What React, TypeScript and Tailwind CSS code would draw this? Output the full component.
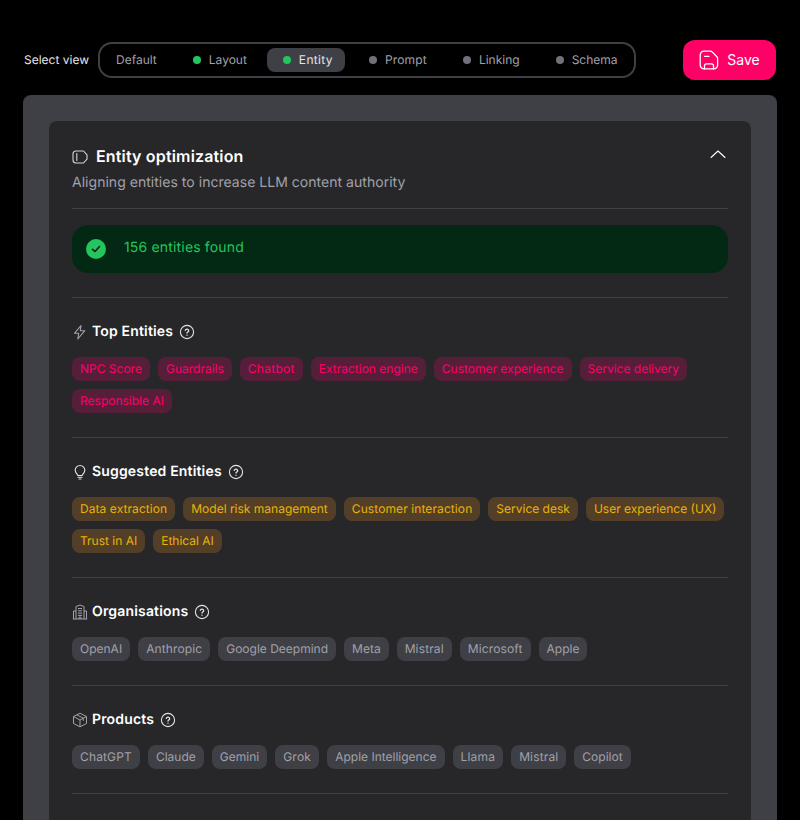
const font = { fontFamily: 'Inter, sans-serif' };

const tabs = [
  { label: 'Default', dot: '', track: '' },
  { label: 'Layout', dot: 'bg-[#22c55e]', track: '' },
  { label: 'Entity', dot: 'bg-[#22c55e]', track: 'tracking-[0.028em]', active: true },
  { label: 'Prompt', dot: 'bg-[#71717a]', track: 'tracking-[0.014em]' },
  { label: 'Linking', dot: 'bg-[#71717a]', track: '' },
  { label: 'Schema', dot: 'bg-[#71717a]', track: '' },
];

// chips whose labels run a little wider with the installed Inter
const chipTracking: Record<string, string> = {
  Chatbot: 'tracking-[0.024em]',
  'Customer interaction': 'tracking-[0.008em]',
  'Data extraction': 'tracking-[0.006em]',
  Anthropic: 'tracking-[0.01em]',
  Mistral: 'tracking-[0.012em]',
  Microsoft: 'tracking-[0.01em]',
  ChatGPT: 'tracking-[0.012em]',
  Grok: 'tracking-[0.02em]',
  Llama: 'tracking-[0.015em]',
};

function HelpIcon() {
  return (
    <svg width="16" height="16" viewBox="0 0 16 16" fill="none" stroke="#e4e4e7" strokeWidth="1.1" strokeLinecap="round" strokeLinejoin="round">
      <circle cx="8" cy="8" r="6.6" />
      <path strokeWidth="1.3" d="M6.3 6.300a1.750 1.750 0 0 1 3.400.500c0 1.100-1.700 1.400-1.700 2.300" />
      <path strokeWidth="1.3" d="M8 11.200v.1" />
    </svg>
  );
}

function BoltIcon() {
  return (
    <svg width="16" height="16" viewBox="0 0 16 16" fill="none" stroke="#a1a1aa" strokeWidth="1.1" strokeLinejoin="round">
      <path d="M9 1.500 2.500 9.300h4.200L5.800 15l7-8.300H8.300L9 1.500Z" />
    </svg>
  );
}

function BulbIcon() {
  return (
    <svg width="16" height="16" viewBox="0 0 16 16" fill="none" stroke="#e4e4e7" strokeWidth="1.1" strokeLinecap="round" strokeLinejoin="round">
      <path d="M5.800 11.500c0-1.300-2.600-2.400-2.600-5.200a4.800 4.800 0 0 1 9.600 0c0 2.800-2.600 3.900-2.600 5.200Z" />
      <path d="M6 13.300h4M7 15h2" />
    </svg>
  );
}

function BuildingIcon() {
  return (
    <svg width="16" height="16" viewBox="0 0 16 16" fill="none" stroke="#a1a1aa" strokeWidth="1" strokeLinejoin="round">
      <path d="M4 15V2.500L8 1l4 1.500V15M4 7H1.500v8M12 7h2.500v8M.8 15h14.400" />
      <path d="M6 4.500h4M6 6.800h4M6 9.100h4M6 11.400h4M7 15v-1.800h2V15" />
    </svg>
  );
}

function BoxIcon() {
  return (
    <svg width="16" height="16" viewBox="0 0 16 16" fill="none" stroke="#a1a1aa" strokeWidth="1" strokeLinejoin="round">
      <path d="M8 1.200 14.500 4.500v7L8 14.800 1.500 11.500v-7L8 1.200Z" />
      <path d="M1.500 4.500 8 8l6.500-3.500M8 8v6.800M4.800 2.800l6.500 3.400v2.600" />
    </svg>
  );
}

function PeopleIcon() {
  return (
    <svg width="16" height="16" viewBox="0 0 16 16" fill="none" stroke="#a1a1aa" strokeWidth="1" strokeLinecap="round">
      <circle cx="8" cy="4" r="3.300" />
      <path d="M2 15c0-3.300 2.700-5 6-5s6 1.700 6 5" />
    </svg>
  );
}

function TagIcon() {
  return (
    <svg width="16" height="16" viewBox="0 0 16 16" fill="none" stroke="#d4d4d8" strokeWidth="1.100" strokeLinejoin="round" strokeLinecap="round">
      <path d="M4 3h7.500L15 6.800v4.400L11.500 15H4a3 3 0 0 1-3-3V6a3 3 0 0 1 3-3Z" />
      <path d="M4.800 5.500v7" />
    </svg>
  );
}

function SaveIcon() {
  return (
    <svg width="20" height="20" viewBox="0 0 20 20" fill="none" stroke="#fff" strokeWidth="1.300" strokeLinecap="round" strokeLinejoin="round">
      <path d="M5 1.200h6.500c.7 0 1.200.3 1.600.7l4.800 4.900c.5.500.700 1 .700 1.700V15a3.800 3.800 0 0 1-3.800 3.800H5A3.800 3.800 0 0 1 1.200 15V5A3.800 3.800 0 0 1 5 1.200Z" />
      <path d="M5.500 18.800v-3a2 2 0 0 1 2-2h5a2 2 0 0 1 2 2v3" />
      <path d="M5.500 6.300h4.500" />
    </svg>
  );
}

function Chip({ label, className }: { label: string; className: string }) {
  return (
    <span className={`flex h-6 items-center rounded-lg px-2 text-xs ${chipTracking[label] ?? ''} ${className}`}>{label}</span>
  );
}

function Section({
  icon,
  title,
  chips,
  chipClass,
}: {
  icon: React.ReactNode;
  title: string;
  chips: string[];
  chipClass: string;
}) {
  return (
    <section className="border-t border-[#3f3f46] pt-6 pb-6">
      <div className="flex h-5 items-center">
        {icon}
        <h3 className="ml-1 text-sm leading-5 font-semibold tracking-[0.012em] text-white">{title}</h3>
        <span className="ml-[6px] flex">
          <HelpIcon />
        </span>
      </div>
      <div className="mt-[15px] flex flex-wrap gap-2">
        {chips.map((c) => (
          <Chip key={c} label={c} className={chipClass} />
        ))}
      </div>
    </section>
  );
}

export default function App() {
  return (
    <div className="h-[820px] overflow-hidden bg-black antialiased [text-rendering:geometricPrecision]" style={font}>
      {/* Top bar */}
      <div className="flex items-center pt-10 pr-6 pl-6">
        <span className="text-xs text-[#e4e4e7]">Select view</span>
        <nav className="ml-[9px] flex h-9 w-[538px] items-center gap-2 rounded-[14px] border-2 border-[#3f3f46] px-1">
          {tabs.map((t) => (
            <div
              key={t.label}
              className={`flex h-6 items-center gap-2 rounded-lg pr-3 text-xs ${t.track} ${t.dot ? 'pl-4' : 'pl-3'} ${
                t.active ? 'bg-[#3f3f46] text-[#e4e4e7]' : 'text-[#a1a1aa]'
              }`}
            >
              {t.dot && <span className={`h-2 w-2 rounded-full ${t.dot}`} />}
              {t.label}
            </div>
          ))}
        </nav>
        <button className="ml-auto flex h-10 w-[93px] items-center justify-center gap-2 rounded-xl bg-[#ff0066] text-sm text-white">
          <SaveIcon />
          Save
        </button>
      </div>

      {/* Panel */}
      <div className="mx-[23px] mt-[15px] rounded-t-lg bg-[#3f4046] px-[26px] pt-[26px]">
        <div className="rounded-t-lg bg-[#27272a] px-[23px] pt-[23px]">
          <div className="flex items-center justify-between">
            <div className="flex items-center gap-2">
              <TagIcon />
              <h2 className="text-base font-semibold tracking-[0.01em] text-white">Entity optimization</h2>
            </div>
            <svg className="mr-[2px]" width="16" height="16" viewBox="0 0 16 16" fill="none" stroke="#fff" strokeWidth="1.100" strokeLinecap="round" strokeLinejoin="round">
              <path d="M1 9.500 8 3l7 6.500" />
            </svg>
          </div>
          <p className="mt-[5px] text-sm leading-5 tracking-[0.002em] text-[#a1a1aa]">Aligning entities to increase LLM content authority</p>

          <div className="mt-[15px] border-t border-[#3f3f46] pt-4 pb-6">
            <div className="flex h-12 items-center gap-[18px] rounded-2xl bg-[#032814] px-[14px]">
              <span className="flex h-5 w-5 items-center justify-center rounded-full bg-[#22c55e]">
                <svg width="12" height="12" viewBox="0 0 12 12" fill="none" stroke="#18181b" strokeWidth="1.600" strokeLinecap="round" strokeLinejoin="round">
                  <path d="M2.500 6.300 5 8.500l4.500-5" />
                </svg>
              </span>
              <span className="-mt-[3px] text-sm tracking-[0.012em] text-[#22c55e]">156 entities found</span>
            </div>
          </div>

          <Section
            icon={<BoltIcon />}
            title="Top Entities"
            chipClass="bg-[#551f3a] text-[#ff0066]"
            chips={['NPC Score', 'Guardrails', 'Chatbot', 'Extraction engine', 'Customer experience', 'Service delivery', 'Responsible AI']}
          />
          <Section
            icon={<BulbIcon />}
            title="Suggested Entities"
            chipClass="bg-[#533f27] text-[#eab308]"
            chips={['Data extraction', 'Model risk management', 'Customer interaction', 'Service desk', 'User experience (UX)', 'Trust in AI', 'Ethical AI']}
          />
          <Section
            icon={<BuildingIcon />}
            title="Organisations"
            chipClass="bg-[#3f3f46] text-[#a1a1aa]"
            chips={['OpenAI', 'Anthropic', 'Google Deepmind', 'Meta', 'Mistral', 'Microsoft', 'Apple']}
          />
          <Section
            icon={<BoxIcon />}
            title="Products"
            chipClass="bg-[#3f3f46] text-[#a1a1aa]"
            chips={['ChatGPT', 'Claude', 'Gemini', 'Grok', 'Apple Intelligence', 'Llama', 'Mistral', 'Copilot']}
          />
          <Section icon={<PeopleIcon />} title="People" chipClass="bg-[#3f3f46] text-[#a1a1aa]" chips={[]} />
        </div>
      </div>
    </div>
  );
}
